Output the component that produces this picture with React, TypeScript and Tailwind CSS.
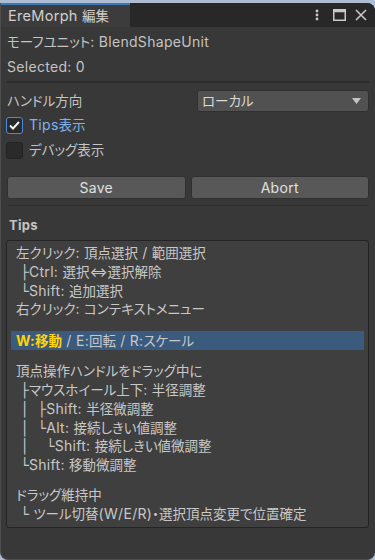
import React from "react";

const CJK = /([\u3000-\u30ff\u4e00-\u9fff\uff00-\uffef・⇔]+)/;

function J({ t }: { t: string }) {
  const parts = t.split(CJK);
  return (
    <>
      {parts.map((p, i) =>
        CJK.test(p) ? (
          <span key={i} className="text-[13.5px] tracking-normal [font-feature-settings:'palt']">
            {p}
          </span>
        ) : (
          <span key={i}>{p}</span>
        )
      )}
    </>
  );
}

function Line({ t }: { t: string }) {
  return (
    <div className="h-[18.8px] leading-[18.8px] whitespace-pre">
      <J t={t} />
    </div>
  );
}

export default function App() {
  return (
    <div
      className="w-[375px] h-[560px] bg-[#aebdd1] pt-[3px] text-[#c4c4c4] text-[14px] tracking-[0.3px]"
      style={{ fontFamily: "Inter, 'DejaVu Sans', 'Noto Sans CJK JP', sans-serif" }}
    >
      <div className="h-[557px] flex flex-col rounded-tr-[8px] rounded-b-[8px] bg-[#383838] overflow-hidden border-l border-b border-[#4e4e4e]">
        {/* title bar */}
        <div className="h-[24px] bg-[#282828] flex items-stretch shrink-0">
          <div className="w-[129px] bg-[#3c3c3c] border-t-2 border-[#3a79bb] flex items-center pl-[7px] text-[#d0d0d0] text-[14.5px]">
            <div className="whitespace-pre">
              <J t="EreMorph 編集" />
            </div>
          </div>
          <div className="flex-1" />
          <div className="flex items-center gap-[9px] pr-[8px]">
            <svg width="4" height="12" viewBox="0 0 4 12">
              <circle cx="2" cy="2" r="1.4" fill="#c8c8c8" />
              <circle cx="2" cy="6" r="1.4" fill="#c8c8c8" />
              <circle cx="2" cy="10" r="1.4" fill="#c8c8c8" />
            </svg>
            <svg width="13" height="12" viewBox="0 0 13 12" className="ml-[5px]">
              <rect x="0.75" y="0.75" width="11.5" height="10.5" fill="none" stroke="#c8c8c8" strokeWidth="1.5" />
              <rect x="0.75" y="0.75" width="11.5" height="2.5" fill="#c8c8c8" />
            </svg>
            <svg width="12" height="12" viewBox="0 0 12 12">
              <path d="M1 1 L11 11 M11 1 L1 11" stroke="#c8c8c8" strokeWidth="1.6" />
            </svg>
          </div>
        </div>

        {/* body */}
        <div className="px-[6px] flex flex-col">
          <div className="mt-[6px] h-[18px] leading-[18px] whitespace-pre">
            <J t="モーフユニット: BlendShapeUnit" />
          </div>
          <div className="mt-[7px] h-[18px] leading-[18px]">Selected: 0</div>
          <div className="mt-[5px] h-[2px] bg-[#2c2c2c]" />

          <div className="mt-[7px] h-[22px] flex items-center">
            <div className="w-[190px]">
              <J t="ハンドル方向" />
            </div>
            <div className="flex-1 h-[22px] bg-[#515151] rounded-[3px] border border-[#303030] flex items-center pl-[4px] pr-[7px] text-[#d8d8d8]">
              <div className="flex-1">
                <J t="ローカル" />
              </div>
              <svg width="9" height="6" viewBox="0 0 9 6">
                <path d="M0 0 H9 L4.5 6 Z" fill="#c4c4c4" />
              </svg>
            </div>
          </div>

          <div className="mt-[4px] h-[18px] flex items-center -ml-[1px]">
            <div className="w-[17px] h-[17px] rounded-[3px] border border-[#4a8ad6] bg-[#2a2a2a] flex items-center justify-center">
              <svg width="11" height="9" viewBox="0 0 11 9">
                <path d="M1 4.5 L4 7.5 L10 1" fill="none" stroke="#f0f0f0" strokeWidth="2" />
              </svg>
            </div>
            <div className="ml-[6px] text-[#7fb3f0]">
              <J t="Tips表示" />
            </div>
          </div>

          <div className="mt-[7px] h-[18px] flex items-center -ml-[1px]">
            <div className="w-[17px] h-[17px] rounded-[3px] border border-[#222222] bg-[#2a2a2a]" />
            <div className="ml-[6px]">
              <J t="デバッグ表示" />
            </div>
          </div>

          <div className="mt-[17px] h-[23px] flex gap-[5px]">
            <div className="flex-1 bg-[#585858] border border-[#303030] rounded-[3px] flex items-center justify-center text-[#e0e0e0]">
              Save
            </div>
            <div className="flex-1 bg-[#585858] border border-[#303030] rounded-[3px] flex items-center justify-center text-[#e0e0e0]">
              Abort
            </div>
          </div>

          <div className="mt-[6px] h-[1px] bg-[#2f2f2f]" />

          <div className="mt-[10px] h-[18px] leading-[18px] pl-[2px] font-bold text-[13px]">Tips</div>

          <div className="mt-[6px] -ml-[1px] h-[288px] bg-[#3f3f3f] border border-[#242424] rounded-[3px] px-[4px] pt-[3px] text-[#c8c8c8]">
            <div className="pl-[5px]">
              <Line t="左クリック: 頂点選択 / 範囲選択" />
              <Line t=" ├Ctrl: 選択⇔選択解除" />
              <Line t=" └Shift: 追加選択" />
              <Line t="右クリック: コンテキストメニュー" />
            </div>
            <div className="mt-[12px] h-[19px] leading-[19px] bg-[#3b5b7e] pl-[5px] whitespace-pre">
              <span className="text-[#ffd400] font-bold">
                <J t="W:移動" />
              </span>
              <J t=" / E:回転 / R:スケール" />
            </div>
            <div className="mt-[12px] pl-[5px]">
              <Line t="頂点操作ハンドルをドラッグ中に" />
              <Line t=" ├マウスホイール上下: 半径調整" />
              <Line t=" │  ├Shift: 半径微調整" />
              <Line t=" │  └Alt: 接続しきい値調整" />
              <Line t=" │    └Shift: 接続しきい値微調整" />
              <Line t=" └Shift: 移動微調整" />
            </div>
            <div className="mt-[11px] pl-[5px]">
              <Line t="ドラッグ維持中" />
              <Line t=" └ ツール切替(W/E/R)・選択頂点変更で位置確定" />
            </div>
          </div>
        </div>
      </div>
    </div>
  );
}
